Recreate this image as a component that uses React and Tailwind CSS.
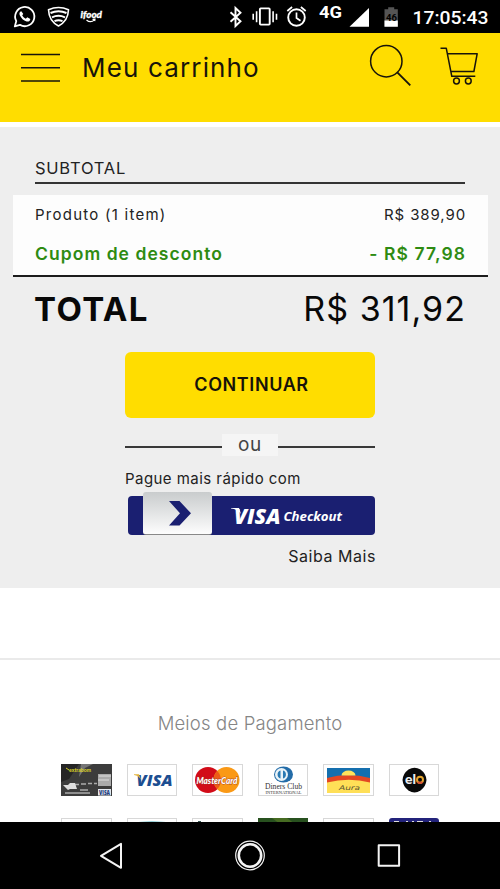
function StatusBar() {
  return (
    <div className="h-[33px] bg-black">
      <svg width="500" height="33" viewBox="0 0 500 33" fill="none" stroke="#fff">
        <path d="M14.8 26.4l1.5-5.3A9.6 9.6 0 1 1 20 24.9z" strokeWidth="1.8" strokeLinejoin="round" />
        <path d="M21.3 11.2c-1.8.6-2.3 2.2-1.5 4 1.4 3 3.7 5.4 6.8 6.3 1.9.5 3.7-.6 3.7-2.5l-3-1.7-1.5 1.5c-1.7-.7-2.9-2-3.6-3.5l1.1-1.3z" fill="#fff" stroke="none" />
        <path d="M48.5 9.8q10-4.6 20 0c-.3 7.6-3 12.6-10 16.2-7-3.6-9.7-8.600-10-16.200z" strokeWidth="1.6" strokeLinejoin="round" />
        <path d="M50.5 13q8-3.600 16 0M52 17.300q6.500-3 13 0M54.500 21.200q4-1.800 8 0" strokeWidth="2" />
        <text x="80.500" y="18" fill="#fff" stroke="#fff" strokeWidth=".3" fontFamily="Lato, sans-serif" fontWeight="900" fontStyle="italic" fontSize="9.500" textLength="21.500" lengthAdjust="spacingAndGlyphs">ifood</text>
        <path d="M86.500 20q4 3.400 8-.1M92.500 19.300l2.500-.2-.3 2" strokeWidth="1.200" />
        <path d="M230.500 12.300l10 9-5 4.700V8l5 4.700-10 9" strokeWidth="1.900" />
        <rect x="259.900" y="8.400" width="9.800" height="16.200" strokeWidth="1.900" rx=".8" />
        <path d="M256.600 11.300v11M253.200 13.800v6M273.100 11.300v11M276.500 13.800v6" strokeWidth="1.600" />
        <circle cx="296.500" cy="17.500" r="8.300" strokeWidth="1.900" />
        <path d="M296.500 12.500v5.500l4 2.700M287.300 11l4.800-4M305.700 11l-4.800-4" strokeWidth="1.700" />
        <text x="319" y="18" fill="#fff" stroke="none" fontFamily="Roboto, sans-serif" fontWeight="700" fontSize="16" textLength="23" lengthAdjust="spacingAndGlyphs">4G</text>
        <path d="M349.500 26.800L369 8v18.800z" fill="#fff" stroke="none" />
        <path d="M384.500 9.200h3.700V7.200h6v2h3.600v17.500h-13.300z" fill="#555" stroke="none" />
        <path d="M384.500 20.500h13.300v6.200h-13.300z" fill="#fff" stroke="none" />
        <text x="386" y="20.500" fill="#000" stroke="none" fontFamily="Roboto, sans-serif" fontWeight="700" fontSize="9.500">46</text>
        <text x="412.500" y="24.300" fill="#fff" stroke="none" fontFamily="Roboto, sans-serif" fontWeight="500" fontSize="19" textLength="76" lengthAdjust="spacingAndGlyphs">17:05:43</text>
      </svg>
    </div>
  );
}

function Header() {
  return (
    <header className="flex h-[89px] items-start bg-[#ffdd00] pt-[10px] pl-[20px] text-[#17140a]">
      <svg className="mt-[9px]" width="41" height="32" stroke="currentColor" strokeWidth="1.6">
        <path d="M1 2.500h39M1 15.700h39M1 29h39" />
      </svg>
      <h1 className="ml-[21px] w-[279px] text-[26px] leading-[49px] tracking-[1.150px] whitespace-nowrap">Meu carrinho</h1>
      <svg width="44" height="46" className="ml-[6px]" fill="none" stroke="currentColor" strokeWidth="1.500">
        <circle cx="19.300" cy="18.200" r="15.700" />
        <path d="M30.300 29.300l13 13" strokeWidth="1.900" />
      </svg>
      <svg width="40" height="44" className="ml-[28px]" fill="none" stroke="currentColor" strokeWidth="1.500" strokeLinejoin="round">
        <path d="M1.500 5.300h5.800l5.500 28h23.500M8.500 10.700h29.700l-3.300 17.800H12" />
        <circle cx="17.500" cy="38" r="2.900" />
        <circle cx="29.300" cy="38" r="2.900" />
      </svg>
    </header>
  );
}

function Summary() {
  return (
    <section className="mt-[5px] h-[461px] bg-[#eeeeee] px-[12.500px] pt-[30px] text-[#222]">
      <div className="mx-[22.500px] h-[27px] border-b-2 border-[#333]">
        <h2 className="text-[16.500px] leading-[22px] tracking-[0.750px]">SUBTOTAL</h2>
      </div>
      <div className="mt-[11px] h-[82px] border-b-2 border-[#1c1c1c] bg-[#fdfdfd] px-[22.500px] pt-[10px]">
        <div className="flex justify-between text-[15px] leading-[20px]">
          <span className="tracking-[1.250px]">Produto (1 item)</span>
          <span className="-mr-[1px] tracking-[0.900px]">R$ 389,90</span>
        </div>
        <div className="mt-[19px] flex justify-between text-[17.500px] leading-[20px] font-semibold text-[#2e8b12]">
          <span className="tracking-[1.050px]">Cupom de desconto</span>
          <span className="-mr-[1px] tracking-[1.100px]">- R$ 77,98</span>
        </div>
      </div>
      <div className="mx-[22.500px] flex h-[65px] justify-between leading-[64px] text-[#080808]">
        <span className="-ml-px text-[33px] font-bold tracking-[1.400px]">TOTAL</span>
        <span className="-mr-[1px] text-[34px] tracking-[1.050px]">R$ 311,92</span>
      </div>
      <div className="mx-auto mt-[10px] w-[250px]">
        <button className="block h-[66px] w-full rounded-[6px] bg-[#ffdd00] pl-[3px] text-[18px] leading-[64px] font-semibold tracking-[0.600px] text-[#16120a]">CONTINUAR</button>
        <div className="mt-[16px] flex h-[22px] items-center text-[#444]">
          <span className="mt-[3px] h-[2px] flex-1 bg-[#383838]" />
          <span className="h-[22px] w-[56px] bg-[#f5f5f5] text-center text-[19px] leading-[21px] tracking-[0.800px]">ou</span>
          <span className="mt-[3px] h-[2px] flex-1 bg-[#383838]" />
        </div>
        <p className="mt-[12px] text-[15px] leading-[22px] tracking-[0.450px] whitespace-nowrap">Pague mais rápido com</p>
        <div className="mt-[2px] ml-[2.500px] flex h-[43px] items-end">
          <div className="flex h-[39px] w-full rounded-[4px] bg-[#1a1f71]">
            <div className="-mt-[4px] ml-[15.500px] flex h-[43px] w-[69px] items-center justify-center rounded-[3px] border-b border-[#888] bg-linear-to-b from-[#c9cccd] to-[#fdfdfd]">
              <svg width="22" height="25" className="ml-[4px]" fill="#1a1f71">
                <path d="M0 0h10.500L22 12.300 10.500 24.600H0L11 12.300z" />
              </svg>
            </div>
            <svg width="112" height="34" viewBox="0 -7 112 34" className="mt-[3px] ml-[18.500px]" fill="#fff">
              <text x="3" y="17.500" fontFamily="'Open Sans', sans-serif" fontWeight="800" fontStyle="italic" fontSize="21.500" textLength="46.500" lengthAdjust="spacingAndGlyphs">VISA</text>
              <path d="M0 2h8l2 6C7.500 4 4 3 0 2.500z" />
              <text x="52.500" y="14.700" fontFamily="'Open Sans', sans-serif" fontWeight="700" fontStyle="italic" fontSize="12.500" textLength="58.500" lengthAdjust="spacingAndGlyphs">Checkout</text>
            </svg>
          </div>
        </div>
        <p className="-mr-px mt-[10px] text-right text-[16px] leading-[22px] tracking-[0.550px]">Saiba Mais</p>
      </div>
    </section>
  );
}

function Card({ children }) {
  return (
    <div className="h-[32px] w-[50.500px] border border-[#d8d8d8] bg-white">
      <svg width="49" height="30" viewBox="0 0 49 30" className="block overflow-visible">{children}</svg>
    </div>
  );
}

function Payments() {
  return (
    <section className="mt-[70px] h-[164px] overflow-hidden border-t-[2px] border-[#eaeaea] bg-white">
      <h3 className="mt-[51px] text-center text-[18.500px] leading-[24px] font-light tracking-[0.170px] text-[#858585]">Meios de Pagamento</h3>
      <div className="mt-[29px] ml-[61px] grid grid-cols-[repeat(6,50.500px)] gap-x-[15px] gap-y-[22px]">
        <div className="h-[32px] bg-[#3c3c3c]">
          <svg width="50.500" height="32" className="block overflow-visible">
            <path d="M0 0h18L8 15 0 18z" fill="#252525" />
            <path d="M20 0h12l-8 4-6 9z" fill="#757575" />
            <path d="M5 4l3 2" stroke="#d6ce2b" />
            <text x="8" y="8" fontFamily="Lato, sans-serif" fontWeight="900" fontSize="6" fill="#d6ce2b" textLength="22" lengthAdjust="spacingAndGlyphs">extrabom</text>
            <path d="M37 10h13v12H37z" fill="#aaa" />
            <path d="M38 12h12M37 16h11" stroke="#ddd" />
            <path d="M12 20.500h6M20 20h5M27 19.500h4M33 19.500h3M19 26h8M4 29h25" stroke="#aaa" strokeWidth="1.700" />
            <path d="M2 21h5l2-2h5l2 6H9l-2 1z" fill="#ddd" />
            <path d="M37 25h13v6.500H37z" fill="#e4e9f1" />
            <text x="38" y="30.500" fontFamily="Open Sans, sans-serif" fontWeight="800" fontSize="6" fill="#263e7d" textLength="11" lengthAdjust="spacingAndGlyphs">VISA</text>
          </svg>
        </div>
        <Card>
          <text x="8.500" y="21" fontFamily="'Open Sans', sans-serif" fontWeight="800" fontStyle="italic" fontSize="16.500" fill="#1c4e91" textLength="36" lengthAdjust="spacingAndGlyphs">VISA</text>
          <path d="M6 9.300h5l2 5.500C11 11.500 9 10.500 6 10z" fill="#e3b33a" />
        </Card>
        <Card>
          <circle cx="15" cy="15" r="13" fill="#d20b18" />
          <circle cx="33.500" cy="15" r="13" fill="#fa9915" />
          <path d="M24.250 5.900a13 13 0 0 1 0 18.200 13 13 0 0 1 0-18.200" fill="#ed5a18" />
          <text x="3.500" y="18.700" fontFamily="Lato, sans-serif" fontWeight="900" fontStyle="italic" fontSize="9.500" fill="#fff" stroke="#a53b25" strokeWidth=".8" paintOrder="stroke" textLength="41" lengthAdjust="spacingAndGlyphs">MasterCard</text>
        </Card>
        <Card>
          <ellipse cx="24.500" cy="9.500" rx="9.500" ry="8" fill="#236ca8" />
          <circle cx="22.500" cy="9.500" r="6.500" fill="#e9f3f8" />
          <path d="M21.500 5.500a4.200 4.200 0 0 0 0 8zM24 5.500a4.200 4.200 0 0 1 0 8z" fill="#2879b3" />
          <text x="6" y="23.500" fontFamily="'Liberation Serif', serif" fontSize="8.500" fill="#333" textLength="37" lengthAdjust="spacingAndGlyphs">Diners Club</text>
          <text x="6.500" y="28.500" fontFamily="'Liberation Serif', serif" fontSize="5" fill="#333" textLength="36" lengthAdjust="spacingAndGlyphs">INTERNATIONAL</text>
        </Card>
        <Card>
          <path d="M3 3h43v25H3z" fill="#ffdf57" />
          <path d="M3 3h43v10H3z" fill="#146fae" />
          <path d="M3 13q21-6 43 0v4.500q-21-5.500-43 0z" fill="#e44722" />
          <path d="M17.500 10.600a7 5 0 0 1 14 0z" fill="#ffe35c" />
          <text x="15" y="24.500" fontFamily="'DejaVu Sans', sans-serif" fontStyle="italic" fontSize="6.500" fill="#5c5531" textLength="21" lengthAdjust="spacingAndGlyphs">Aura</text>
        </Card>
        <Card>
          <path d="M18.500 4.500Q24.500 1 30.500 4.500 36 8.500 36.500 15 36 21.500 30.500 25.500 24.500 29.500 18.500 25.500 13 21.500 12.500 15 13 8.500 18.500 4.500z" fill="#090909" />
          <text x="15" y="18.500" fontFamily="Lato, sans-serif" fontWeight="900" fontSize="13" fill="#eee" textLength="11" lengthAdjust="spacingAndGlyphs">el</text>
          <circle cx="30" cy="14.800" r="3" fill="none" stroke="#e5a52d" strokeWidth="2" />
          <path d="M27.600 16.800a3 3 0 0 0 4.800 0" fill="none" stroke="#d85235" strokeWidth="2" />
        </Card>
        <Card />
        <Card><path d="M4 4.500Q6 2.500 24 2.500T44 4.500z" fill="#279cae" /></Card>
        <Card><path d="M5 2h3v2H5z" fill="#3a5a55" /></Card>
        <div className="h-[32px] bg-[#28511f]">
          <svg width="50" height="32"><path d="M14 0l8 6h15l-8-6z" fill="#466b22" /></svg>
        </div>
        <Card />
        <div className="h-[32px] rounded-[3px] bg-[#23237b]">
          <svg width="50" height="32"><path d="M5 3.500h5M17 3.500h2M23 3.500h2M28 3.500h6M40 3.500h2" stroke="#ddd" /></svg>
        </div>
      </div>
    </section>
  );
}

function NavBar() {
  return (
    <nav className="h-[67px] bg-black">
      <svg width="500" height="67" fill="none" stroke="#f4f4f4" strokeWidth="2" strokeLinejoin="round">
        <path d="M121 21.800v24L101 33.800z" />
        <circle cx="250" cy="33.500" r="14.300" strokeWidth="1.200" />
        <circle cx="250" cy="33.500" r="11.200" strokeWidth="2.600" />
        <rect x="378.700" y="23.300" width="20.400" height="20.400" />
      </svg>
    </nav>
  );
}

export default function App() {
  return (
    <main className="h-[889px] w-[500px] overflow-hidden bg-white font-[Inter,sans-serif]">
      <StatusBar />
      <Header />
      <Summary />
      <Payments />
      <NavBar />
    </main>
  );
}
